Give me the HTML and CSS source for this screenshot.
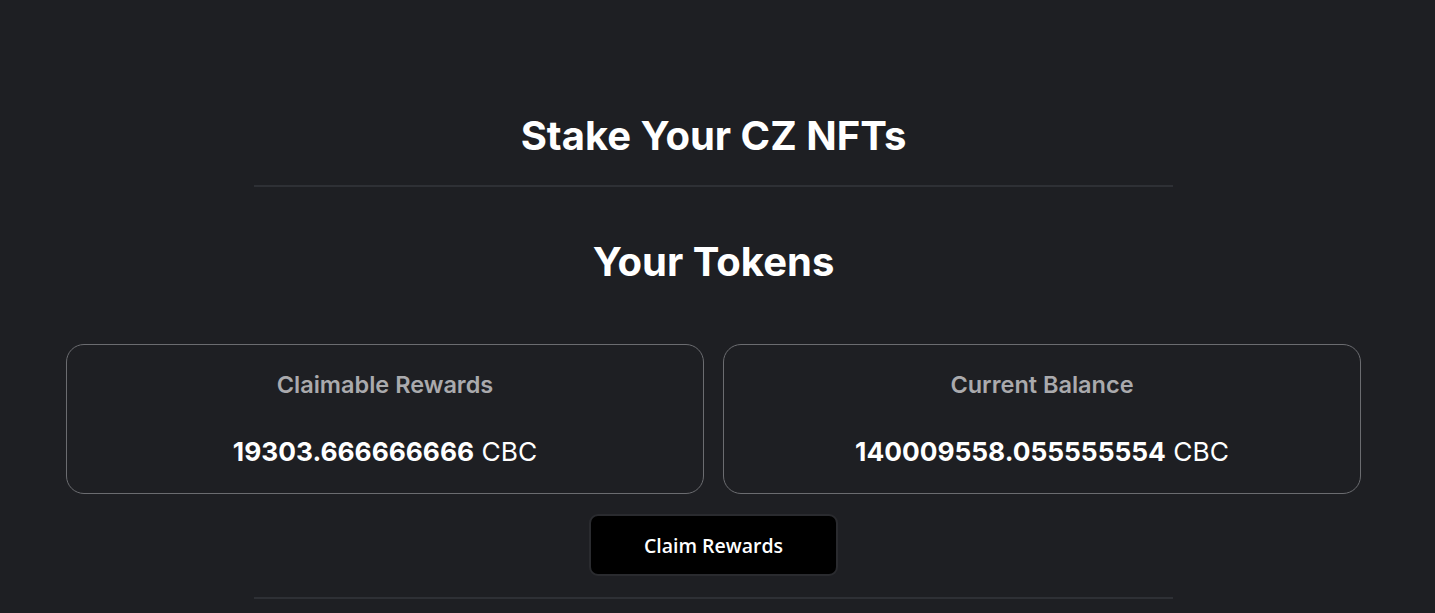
FILE: index.html
```html
<!DOCTYPE html>
<html>
<head>
<meta charset="utf-8">
<link rel="stylesheet" href="styles.css">
</head>
<body>
<main class="page">
  <h1 class="title">Stake Your CZ NFTs</h1>
  <hr class="divider">
  <h2 class="subtitle">Your Tokens</h2>
  <div class="cards">
    <div class="card">
      <h3 class="card-title">Claimable Rewards</h3>
      <p class="card-value"><b>19303.666666666</b> CBC</p>
    </div>
    <div class="card">
      <h3 class="card-title">Current Balance</h3>
      <p class="card-value"><b>140009558.055555554</b> CBC</p>
    </div>
  </div>
  <button class="claim">Claim Rewards</button>
  <hr class="divider bottom">
</main>
</body>
</html>
```
FILE: styles.css
```css
html, body {
  margin: 0;
  padding: 0;
  background: #1e1f23;
  color: #fff;
  font-family: Inter, "Noto Sans", sans-serif;
}
.page {
  width: 1427px;
  display: flex;
  flex-direction: column;
  align-items: center;
  padding-top: 106px;
}
.title {
  margin: 0;
  font-size: 40px;
  font-weight: 700;
  line-height: 60px;
}
.divider {
  width: 919px;
  margin: 19px 0 0;
  border: 0;
  border-top: 2px solid #2e3035;
}
.bottom {
  margin-top: 21px;
}
.subtitle {
  margin: 34px 0 0;
  font-size: 40px;
  font-weight: 700;
  line-height: 82px;
}
.cards {
  display: flex;
  gap: 19px;
  margin-top: 41px;
}
.card {
  width: 636px;
  height: 148px;
  border: 1px solid #6b6c70;
  border-radius: 18px;
  display: flex;
  flex-direction: column;
  align-items: center;
}
.card-title {
  margin: 26px 0 0;
  font-size: 23.5px;
  font-weight: 600;
  color: #aaaaad;
  line-height: 28px;
}
.card-value {
  margin: 38px 0 0;
  font-size: 26.3px;
  line-height: 30px;
}
.card-value b {
  font-weight: 700;
}
.claim {
  margin-top: 20px;
  width: 249px;
  height: 62px;
  background: #000;
  color: #fff;
  border: 2px solid #2a2b2f;
  border-radius: 9px;
  font-family: "Open Sans", "Noto Sans", sans-serif;
  font-size: 19.5px;
  font-weight: 600;
}
```
